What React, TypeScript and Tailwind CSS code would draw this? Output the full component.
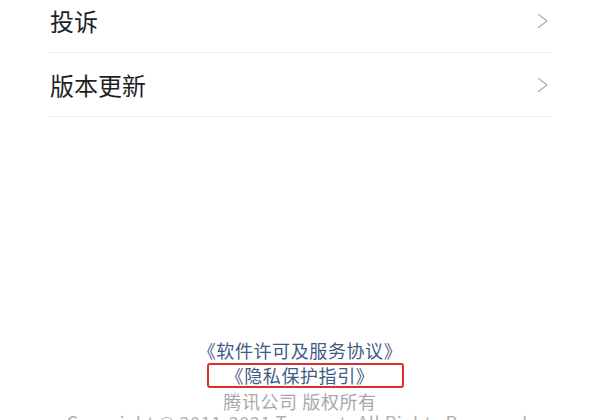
const rows = ["投诉", "版本更新"];

function Chevron() {
  return (
    <svg width="12" height="16" viewBox="0 0 12 16" fill="none" className="text-[#b3b3b3]">
      <path d="M1.5 1.5 L10 8 L1.5 14.5" stroke="currentColor" strokeWidth="1.5" strokeLinecap="round" strokeLinejoin="round" />
    </svg>
  );
}

export default function App() {
  return (
    <div
      className="h-[420px] w-[600px] overflow-hidden bg-white"
      style={{ fontFamily: '"Noto Sans CJK SC", "Noto Sans", sans-serif' }}
    >
      <div className="-mt-[11px] px-12">
        {rows.map((r) => (
          <div key={r} className="flex h-[64px] items-center justify-between border-b border-[#ececec] pr-[3px]">
            <span className="pl-[2px] text-[24px] leading-none text-[#1f1f1f]">{r}</span>
            <Chevron />
          </div>
        ))}
      </div>

      <div className="mt-[221px] flex flex-col items-center text-[18px] leading-[25px] tracking-[0.6px]">
        <div className="text-[#3f5b85]">《软件许可及服务协议》</div>
        <div className="flex w-full justify-center">
          <div className="ml-[11px] rounded-[3px] border-2 border-[#d9302c] pl-[17px] pr-[28px] leading-[21px] text-[#3f5b85]">
            《隐私保护指引》
          </div>
        </div>
        <div className="mt-[1px] text-[#a8a8a8]">腾讯公司 版权所有</div>
        <div className="leading-[17px] text-[#b0b0b0]">Copyright © 2011-2021 Tencent. All Rights Reserved.</div>
      </div>
    </div>
  );
}
